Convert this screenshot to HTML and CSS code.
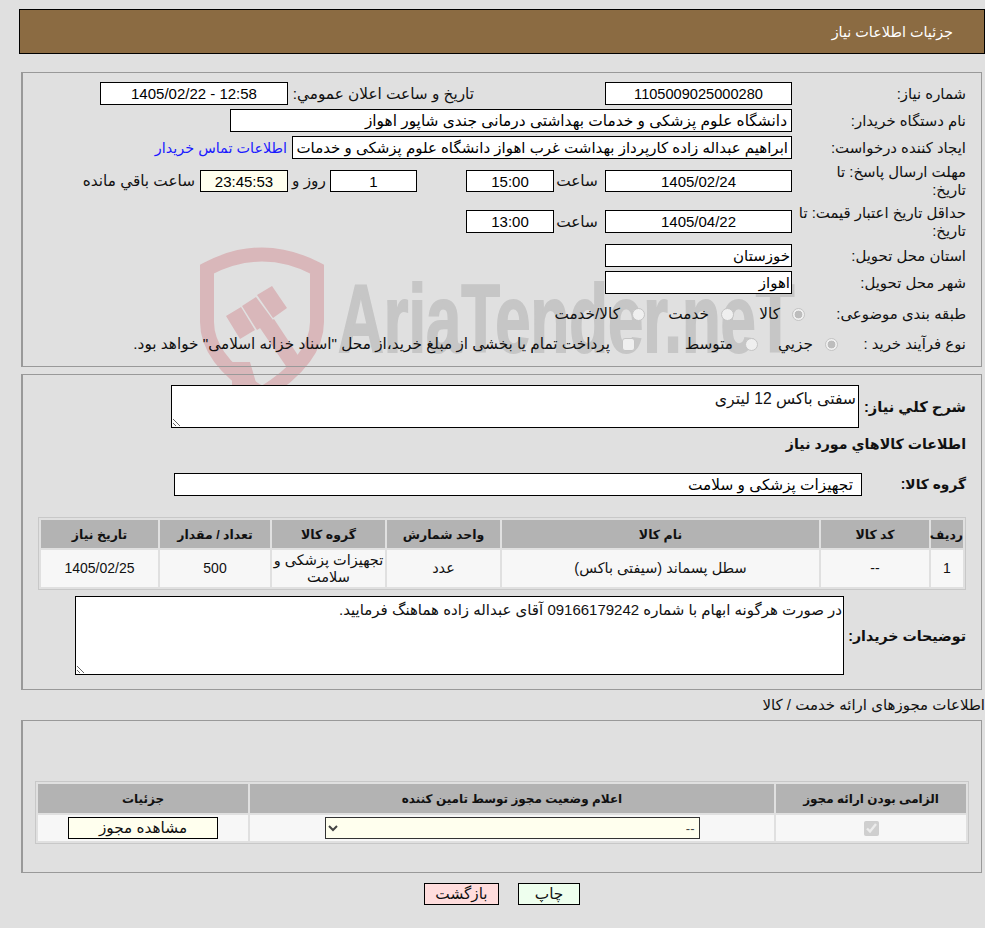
FILE: index.html
```html
<!DOCTYPE html>
<html lang="fa" dir="rtl">
<head>
<meta charset="utf-8">
<title>جزئیات اطلاعات نیاز</title>
<link rel="stylesheet" href="styles.css">
</head>
<body>
<div class="watermark" aria-hidden="true">
  <svg class="shield" width="140" height="160" viewBox="195 240 140 160">
    <path d="M207 269 Q262 240 317 269 V322 Q317 360 262 394 Q207 360 207 322 Z" fill="none" stroke="#d9b7ba" stroke-width="14"/>
    <path d="M226 316 L241 307 L255 330 L240 339 Z M242 306 L256 297 L273 320 L257 330 Z M257 295 L272 286 L287 308 L273 318 Z M260 328 L274 319 L305 366 L292 375 Z M232 362 L250 362 L257 386 L232 386 Z" fill="#d9b7ba"/>
  </svg>
  <span class="wm-text" dir="ltr">AriaTender.neT</span>
</div>

<header class="title-bar"><h1>جزئیات اطلاعات نیاز</h1></header>

<section class="panel panel-info">
  <div class="row row-1">
    <label class="lbl">شماره نیاز:</label>
    <input class="field f-187 center id" readonly value="1105009025000280">
    <span class="lbl-mid">تاریخ و ساعت اعلان عمومي:</span>
    <input class="field f-188 center" readonly value="1405/02/22 - 12:58" dir="ltr">
  </div>
  <div class="row">
    <label class="lbl">نام دستگاه خریدار:</label>
    <input class="field f-562" readonly value="دانشگاه علوم پزشکی و خدمات بهداشتی درمانی جندی شاپور اهواز">
  </div>
  <div class="row">
    <label class="lbl">ایجاد کننده درخواست:</label>
    <input class="field f-500" readonly value="ابراهیم عبداله زاده کارپرداز بهداشت غرب اهواز دانشگاه علوم پزشکی و خدمات ، بهداشتی درمانی">
    <a class="contact" href="#">اطلاعات تماس خریدار</a>
  </div>
  <div class="row row-4">
    <label class="lbl two">مهلت ارسال پاسخ: تا<br>تاریخ:</label>
    <input class="field f-187 center short" readonly value="1405/02/24">
    <span class="unit">ساعت</span>
    <input class="field f-88 center short" readonly value="15:00">
    <input class="field f-87 center short gap-49" readonly value="1">
    <span class="unit-day">روز و</span>
    <input class="field f-88 center short cream" readonly value="23:45:53">
    <span class="unit-left">ساعت باقي مانده</span>
  </div>
  <div class="row row-5">
    <label class="lbl two">حداقل تاریخ اعتبار قیمت: تا تاریخ:</label>
    <input class="field f-187 center" readonly value="1405/04/22">
    <span class="unit">ساعت</span>
    <input class="field f-88 center" readonly value="13:00">
  </div>
  <div class="row row-6">
    <label class="lbl">استان محل تحویل:</label>
    <input class="field f-187 tight" readonly value="خوزستان">
  </div>
  <div class="row">
    <label class="lbl">شهر محل تحویل:</label>
    <input class="field f-187 tight" readonly value="اهواز">
  </div>
  <div class="row row-8">
    <label class="lbl">طبقه بندی موضوعی:</label>
    <input class="radio r-8a" type="radio" name="cat" checked disabled><span class="opt o-kala">کالا</span>
    <input class="radio" type="radio" name="cat" disabled><span class="opt o-khedmat">خدمت</span>
    <input class="radio" type="radio" name="cat" disabled><span class="opt">کالا/خدمت</span>
  </div>
  <div class="row row-9">
    <label class="lbl lbl-9">نوع فرآیند خرید :</label>
    <input class="radio" type="radio" name="proc" checked disabled><span class="opt o-jozi">جزيي</span>
    <input class="radio" type="radio" name="proc" disabled><span class="opt o-mot">متوسط</span>
    <input class="radio r-square" type="radio" name="proc" disabled><span class="opt">پرداخت تمام يا بخشی از مبلغ خرید،از محل "اسناد خزانه اسلامی" خواهد بود.</span>
  </div>
</section>

<section class="panel panel-goods">
  <div class="row-desc">
    <label class="lbl-b">شرح کلي نیاز:</label>
    <textarea class="area a-desc" readonly>سفتی باکس 12 لیتری</textarea>
  </div>
  <h2 class="sub">اطلاعات کالاهاي مورد نیاز</h2>
  <div class="row-group">
    <label class="lbl-b lbl-group">گروه کالا:</label>
    <input class="field f-688 group-input" readonly value="تجهیزات پزشکی و سلامت">
  </div>
  <table class="grid goods">
    <colgroup><col class="c1"><col class="c2"><col class="c3"><col class="c4"><col class="c5"><col class="c6"><col class="c7"></colgroup>
    <thead>
      <tr><th>ردیف</th><th>کد کالا</th><th>نام کالا</th><th>واحد شمارش</th><th>گروه کالا</th><th>تعداد / مقدار</th><th>تاریخ نیاز</th></tr>
    </thead>
    <tbody>
      <tr><td class="num">1</td><td class="num">--</td><td>سطل پسماند (سیفتی باکس)</td><td>عدد</td><td>تجهیزات پزشکی و سلامت</td><td class="num">500</td><td class="num">1405/02/25</td></tr>
    </tbody>
  </table>
  <div class="row-note">
    <label class="lbl-b lbl-note">توضیحات خریدار:</label>
    <textarea class="area a-note" readonly>در صورت هرگونه ابهام با شماره 09166179242 آقای عبداله زاده هماهنگ فرمایید.</textarea>
  </div>
</section>

<h3 class="permits-title">اطلاعات مجوزهای ارائه خدمت / کالا</h3>

<section class="panel panel-permits">
  <table class="grid permits">
    <colgroup><col class="p1"><col class="p2"><col class="p3"></colgroup>
    <thead>
      <tr><th>الزامی بودن ارائه مجوز</th><th>اعلام وضعیت مجوز توسط تامین کننده</th><th>جزئیات</th></tr>
    </thead>
    <tbody>
      <tr>
        <td><input class="check" type="checkbox" checked disabled></td>
        <td><select class="status"><option>--</option></select></td>
        <td><button class="btn view" type="button">مشاهده مجوز</button></td>
      </tr>
    </tbody>
  </table>
</section>

<div class="actions">
  <button class="btn print" type="button">چاپ</button>
  <button class="btn back" type="button">بازگشت</button>
</div>
</body>
</html>
```
FILE: styles.css
```css
* { box-sizing: border-box; }
html, body { height: 928px; overflow: hidden; }
body {
  margin: 0;
  background: #e0e0e0;
  color: #111;
  font-family: "Liberation Sans", "DejaVu Sans", sans-serif;
  font-size: 15.3px;
  position: relative;
}
.watermark { position: absolute; inset: 0; z-index: -1; overflow: hidden; }
.shield { position: absolute; left: 195px; top: 240px; }
.wm-text {
  position: absolute;
  left: 338px;
  top: 269px;
  font: bold 96px/100px "Liberation Sans", sans-serif;
  color: #c6c6c6;
  -webkit-text-stroke: 2px #c6c6c6;
  transform-origin: left top;
  transform: scaleX(.66);
  white-space: nowrap;
}
.title-bar {
  height: 45px;
  margin: 9px 0 0 19px;
  border: 1px solid #000;
  background: #8b6b42;
  padding: 13px 31px 0 0;
}
.title-bar h1 { margin: 0; font-size: 14.4px; line-height: 18px; font-weight: normal; color: #fff; }
.panel {
  border: 1px solid #999;
  border-left-width: 2px;
  width: 961px;
  margin-right: 3px;
}
.panel-info { margin-top: 18px; height: 295px; padding: 9px 0 0 0; }
.panel-goods { margin-top: 7px; height: 316px; padding: 10px 0 0; }
.panel-permits { height: 153px; padding: 60px 12px 0 0; }

.row { display: flex; align-items: center; height: 23px; margin-bottom: 4px; }
.lbl {
  width: 189px;
  flex: none;
  padding: 0 15px 0 0;
  font-size: 14.9px;
  line-height: 18px;
  text-align: right;
}
.lbl-mid { margin-right: 131px; width: 181px; white-space: nowrap; flex: none; }
.field {
  height: 23px;
  border: 1px solid #000;
  background: #fff;
  color: #000;
  font: 15px "Liberation Sans", "DejaVu Sans", sans-serif;
  padding: 0 3px;
  text-align: right;
  flex: none;
  outline: none;
  margin: 0;
}
.center { text-align: center; }
.id { font-size: 14.6px; }
.short { height: 22px; }
.tight { padding: 0 1px; }
.cream { background: #ffffee; }
.f-187 { width: 187px; }
.f-188 { width: 188px; margin-right: 5px; }
.f-562 { width: 562px; font-size: 15.4px; padding-right: 4px; }
.f-500 { width: 500px; }
.f-88 { width: 88px; }
.f-87 { width: 87px; }
.f-688 { width: 688px; }
.gap-49 { margin-right: 49px; }
.contact { color: #1a1aff; text-decoration: none; margin-right: 5px; white-space: nowrap; font-size: 14.4px; }
.unit { width: 51px; text-align: center; flex: none; padding-right: 5px; }
.unit-day { width: 42px; text-align: center; flex: none; }
.unit-left { margin-right: 5px; white-space: nowrap; }
.row-4 { margin-top: 11px; height: 22px; }
.row-5 { margin-top: 18px; height: 23px; margin-bottom: 0; }
.row-6 { margin-top: 11px; }
.row-8 { margin-top: 10px; height: 20px; margin-bottom: 0; }
.row-9 { margin-top: 10px; height: 20px; margin-bottom: 0; }
.radio {
  appearance: none;
  margin: 0;
  width: 13px;
  height: 13px;
  flex: none;
  border: 1px solid #c4c4c4;
  border-radius: 50%;
  background: #efefef;
}
.radio:checked { background: radial-gradient(circle, #bdbdbd 0 3.6px, #f0f0f0 4.2px); }
.r-square { border-radius: 3px; }
.opt { white-space: nowrap; flex: none; margin-right: 12px; }
.r-8a { margin-right: -13px; }
.o-kala { width: 46px; }
.o-khedmat { width: 64px; }
.lbl-9 { width: 143px; }
.o-jozi { width: 55px; }
.o-mot { width: 98px; }

.row-desc { display: flex; align-items: center; height: 43px; }
.lbl-b { font-weight: bold; font-size: 14.2px; line-height: 18px; flex: none; white-space: nowrap; padding-right: 15px; }
.row-desc .lbl-b { width: 122px; font-size: 14.7px; }
.area {
  display: block;
  border: 1px solid #000;
  background: #fff;
  color: #111;
  font: 15px "Liberation Sans", "DejaVu Sans", sans-serif;
  padding: 3px 1px;
  margin: 0;
  outline: none;
  flex: none;
}
.a-desc { width: 688px; height: 43px; font-size: 15.7px; padding-right: 2px; }
.a-note { width: 769px; height: 79px; padding-top: 4px; }
.sub { margin: 7px 15px 0 0; font-size: 14.2px; line-height: 18px; font-weight: bold; height: 18px; }
.row-group { display: flex; align-items: center; height: 23px; margin-top: 20px; }
.lbl-group { width: 119px; font-size: 13.8px; }
.group-input { padding-right: 8px; font-size: 15.3px; }
.row-note { display: flex; align-items: center; height: 79px; margin-top: 6px; }
.lbl-note { width: 137px; }

.grid {
  border-collapse: separate;
  border-spacing: 2px;
  border: 1px solid #c8c8c8;
  table-layout: fixed;
}
.grid th {
  background: #b3b3b3;
  font-size: 12.5px;
  font-weight: bold;
  height: 28px;
  padding: 0;
  text-align: center;
}
.grid td { background: #f7f7f7; text-align: center; padding: 0; height: 37px; font-size: 14.5px; line-height: 17px; }
.grid td.num { font-size: 14px; }
.goods { width: 928px; margin: 21px 15px 0 0; }
.c1 { width: 32px; } .c2 { width: 108px; } .c3 { width: 317px; } .c4 { width: 113px; }
.c5 { width: 113px; } .c6 { width: 110px; } .c7 { width: 117px; }
.permits { width: 934px; }
.grid.permits th { font-size: 12px; height: 29px; }
.p1 { width: 190px; } .p2 { width: 524px; } .p3 { width: 210px; }
.permits td { height: 26px; padding: 0; }
.check { margin: 0; vertical-align: middle; width: 15px; height: 15px; }
.status {
  width: 375px;
  height: 22px;
  background: #ffffee;
  border: 1px solid #333;
  color: #444;
  font: 13px "Liberation Sans", "DejaVu Sans", sans-serif;
  display: block;
  margin: 0 auto;
}
.btn {
  border: 1px solid #000;
  color: #111;
  font: 15.3px "Liberation Sans", "DejaVu Sans", sans-serif;
  height: 22px;
  padding: 0;
  margin: 0;
}
.view { width: 150px; background: #ffffee; display: block; margin: 0 auto; height: 22px; }
.permits-title { margin: 6px 0 0 0; font-size: 15px; font-weight: normal; height: 24px; line-height: 18px; white-space: nowrap; }
.actions { display: flex; justify-content: flex-start; margin: 10px 405px 0 0; gap: 19px; }
.print { width: 62px; background: #eeffee; }
.back { width: 75px; background: #ffdddd; }
```
